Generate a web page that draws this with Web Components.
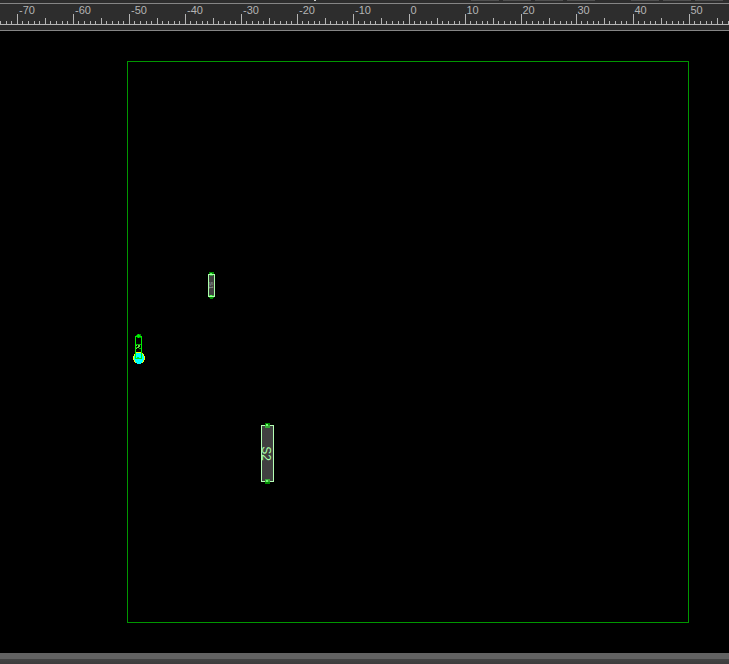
<!DOCTYPE html>
<html lang="en"><head><meta charset="utf-8"><title>Board editor</title>
<style>html,body{margin:0;background:#000;height:100%;overflow:hidden}</style></head><body>
<board-editor></board-editor>
<script>
class RulerBar extends HTMLElement{
  constructor(){
    super();
    const xs=[-39,17,73,129,185,241,297,353,409,465,521,576,633,689,745];
    let d='',t='';
    for(let i=0;i<xs.length-1;i++){
      for(let k=0;k<10;k++){
        const x=k?Math.round(xs[i]+k*5.6-.15):xs[i], h=k===0?10:k===5?6:3;
        if(x>=0&&x<729)d+=`<rect x="${x}" y="${24-h}" width="1" height="${h}"/>`;
      }
      if(i)t+=`<text x="${xs[i]+(i<8?2:1.5)}" y="14">${-80+i*10}</text>`;
    }
    const seg=[471,503,535,567,631,663,695].map(x=>`<rect x="${x}" y="0" width="28" height="1"/>`).join('');
    this.attachShadow({mode:'open'}).innerHTML=`<style>:host{display:block;height:31px;background:#2d2d2d}svg{display:block}text{font:11px "Liberation Sans",Arial,sans-serif;fill:#b4b4b4}</style>
    <svg width="729" height="31" shape-rendering="crispEdges"><g fill="#505050">${seg}</g><rect x="314" y="0" width="2" height="1" fill="#ccc"/>
    <rect y="3" width="729" height="1" fill="#858585"/><rect y="24" width="729" height="1" fill="#b4b4b4"/><rect y="30" width="729" height="1" fill="#858585"/>
    <g fill="#b4b4b4">${d}</g>${t}</svg>`;
  }
}
class BoardCanvas extends HTMLElement{
  constructor(){
    super();
    this.attachShadow({mode:'open'}).innerHTML=`<style>:host{display:block;flex:1;background:#000}svg{display:block}text{font-family:"Liberation Sans",Arial,sans-serif;text-anchor:middle}</style>
    <svg width="729" height="622" viewBox="0 31 729 622" shape-rendering="crispEdges">
    <rect x="127.5" y="61.5" width="561" height="561" fill="none" stroke="#009600"/>
    <path fill="#008c00" d="M209 272h5v2h-5zM209 297h5v1h-5zM210 298h3v1h-3z"/>
    <rect x="208.5" y="274.5" width="6" height="22" fill="#404040" stroke="#aaffaa"/>
    <path fill="#38a038" d="M210 275h3v1h-3zM209 295h5v1h-5z"/><path fill="#50ff50" d="M210 273h2v1h-2zM210 295h2v1h-2z"/>
    <text font-size="6" fill="#a0b0b0" transform="translate(209 285.500) rotate(90)">S1</text>
    <path d="M137 352h4v1h2v1h1v2h1v4h-1v2h-1v1h-2v1h-4v-1h-2v-1h-1v-2h-1v-4h1v-2h1v-1h2z" fill="#ffff00"/>
    <path d="M136 353h6v1h1v2h1v4h-1v2h-1v1h-1v1h-4v-1h-1v-1h-1v-2h-1v-4h1v-2h1z" fill="#00ffff"/>
    <rect x="135.5" y="336.5" width="6" height="22" fill="none" stroke="#00f000"/>
    <path d="M137 334h4v4h-4zM136 335h5v2h-5z" fill="#008c00"/>
    <path d="M138 334h1v1h1v1h1v1h-2v1h-1v-1h-2v-1h1v-1h1z" fill="#00f000"/>
    <path d="M136 344h5v1h-5zM136 347h2v1h-2zM139 348h2v1h-2z" fill="#00b400"/>
    <path d="M136 345h1v1h-1zM138 345h2v2h-2zM137 347h2v1h-2zM136 348h1v1h-1z" fill="#70d050"/>
    <path d="M136 352h5v1h-5z" fill="#ffff00"/><path d="M137 357h2v1h-2z" fill="#00d060"/>
    <path fill="#008c00" d="M265 423h5v2h-5zM265 482h5v2h-5z"/>
    <rect x="261.5" y="425.5" width="12" height="56" fill="#404040" stroke="#b4ffb4"/>
    <path fill="#38a838" d="M265 425h5v3h-5zM265 479h5v3h-5z"/><path fill="#70ff70" d="M266 424h2v2h-2zM266 480h2v2h-2z"/>
    <text font-size="12" fill="#aaffaa" transform="translate(262 453.5) rotate(90)">S2</text>
    </svg>`;
  }
}
class StatusEdge extends HTMLElement{
  constructor(){super();this.attachShadow({mode:'open'}).innerHTML=`<style>:host{display:block;height:11px;background:linear-gradient(#626262 0 6px,#444 6px,#3c3c3c 11px)}</style>`;}
}
class BoardEditor extends HTMLElement{
  constructor(){super();this.attachShadow({mode:'open'}).innerHTML=`<style>:host{display:flex;flex-direction:column;width:729px;height:664px}</style><ruler-bar></ruler-bar><board-canvas></board-canvas><status-edge></status-edge>`;}
}
customElements.define('ruler-bar',RulerBar);customElements.define('board-canvas',BoardCanvas);customElements.define('status-edge',StatusEdge);customElements.define('board-editor',BoardEditor);
</script></body></html>
